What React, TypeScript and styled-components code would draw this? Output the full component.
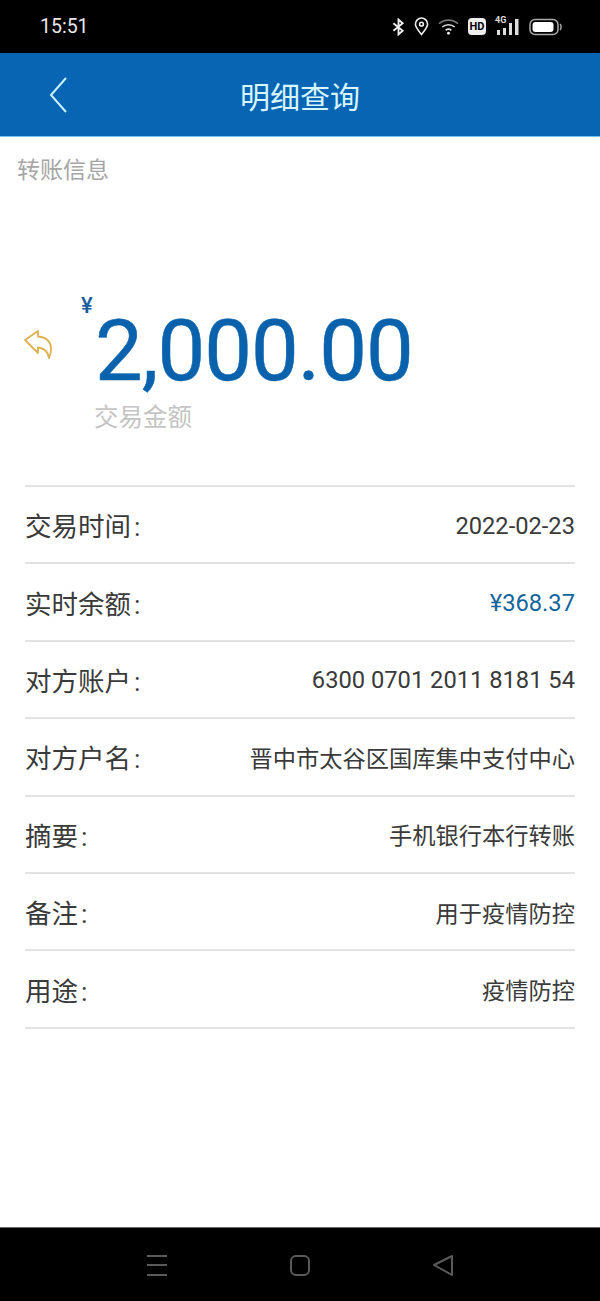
import React, { ReactElement } from 'react';
import styled, { createGlobalStyle } from 'styled-components';

const CJK_STACK = `Roboto, 'Noto Sans CJK SC', sans-serif`;

const DETAILS = [
  { label: '交易时间', value: '2022-02-23', numeric: true },
  { label: '实时余额', value: '¥368.37', numeric: true, accent: true },
  { label: '对方账户', value: '6300 0701 2011 8181 54', numeric: true },
  { label: '对方户名', value: '晋中市太谷区国库集中支付中心' },
  { label: '摘要', value: '手机银行本行转账' },
  { label: '备注', value: '用于疫情防控' },
  { label: '用途', value: '疫情防控' },
];

const App = (): ReactElement => (
  <Page>
    <GlobalStyle />
    <StatusBar>
      <Clock>15:51</Clock>
      <StatusIcons>
        <svg width="13" height="18" viewBox="0 0 14 18" fill="none" stroke="#eee" strokeWidth="2">
          <path d="M1.500 5l10 8-4.500 4V1l4.500 4-10 8" />
        </svg>
        <svg width="15" height="19" viewBox="0 0 16 20" fill="none" stroke="#eee" strokeWidth="1.700">
          <path d="M8 18.500C4 13.500 1.500 10.500 1.500 7.500a6.500 6.500 0 0 1 13 0C14.500 10.500 12 13.500 8 18.500z" />
          <circle cx="8" cy="7.500" r="2" />
        </svg>
        <svg width="21" height="18" viewBox="0 0 22 18" fill="none" stroke="#ddd" strokeWidth="1.700">
          <path d="M1 5.500c5.500-5 14.500-5 20 0" stroke="#777" />
          <path d="M4.500 9c3.500-3.200 9.500-3.200 13 0" />
          <path d="M8 12.500c2-1.600 4-1.600 6 0" />
          <circle cx="11" cy="15.500" r="1.500" fill="#eee" stroke="none" />
        </svg>
        <HdBadge>HD</HdBadge>
        <SignalIcon>
          <SignalLabel>4G</SignalLabel>
          <svg width="25" height="18" viewBox="0 0 25 18" fill="#ddd">
            <rect x="2" y="12" width="3" height="5" />
            <rect x="8" y="10" width="3" height="7" />
            <rect x="14" y="5" width="3" height="12" />
            <rect x="20" y="1" width="3.500" height="16" />
          </svg>
        </SignalIcon>
        <svg width="33" height="18" viewBox="0 0 33 18" fill="none">
          <rect x="1" y="1.500" width="28" height="15" rx="5" stroke="#aaa" strokeWidth="1.500" />
          <rect x="3.500" y="4" width="21" height="10" rx="3" fill="#fff" />
          <path d="M31 6c1.500 1.200 1.500 4.800 0 6" stroke="#aaa" strokeWidth="1.500" />
        </svg>
      </StatusIcons>
    </StatusBar>

    <Header>
      <BackIcon width="20" height="36" viewBox="0 0 20 36" fill="none" stroke="#c9f2ff" strokeWidth="2">
        <path d="M17 1L2 18l15 17" />
      </BackIcon>
      <Title>明细查询</Title>
    </Header>

    <Content>
      <SectionLabel>转账信息</SectionLabel>

      <AmountBlock>
        <ReturnIcon width="32" height="32" viewBox="0 0 32 32" fill="none" stroke="#dfb14f" strokeWidth="1.800" strokeLinejoin="round">
          <path d="M1 10L14 1v5.500c9 .5 17 7 11 21.500-1-6-5-10-11-10.500v5.500L1 10z" />
        </ReturnIcon>
        <AmountColumn>
          <Currency>¥</Currency>
          <Amount>2,000.00</Amount>
          <AmountCaption>交易金额</AmountCaption>
        </AmountColumn>
      </AmountBlock>

      <DetailList>
        {DETAILS.map(({ label, value, accent, numeric }) => (
          <DetailRow key={label}>
            <DetailLabel>
              {label}
              <LabelColon>:</LabelColon>
            </DetailLabel>
            <DetailValue $accent={accent} $numeric={numeric}>
              {value}
            </DetailValue>
          </DetailRow>
        ))}
      </DetailList>
    </Content>

    <NavBar>
      <svg width="22" height="24" viewBox="0 0 22 24" stroke="#5a5a5a" strokeWidth="2">
        <path d="M1 3h20M1 12h20M1 22h20" />
      </svg>
      <svg width="22" height="24" viewBox="0 0 22 24" fill="none" stroke="#5a5a5a" strokeWidth="2">
        <rect x="2" y="3" width="18" height="19" rx="5" />
      </svg>
      <svg width="22" height="24" viewBox="0 0 22 24" fill="none" stroke="#5a5a5a" strokeWidth="2" strokeLinejoin="round">
        <path d="M2 12L20 3v19L2 12z" />
      </svg>
    </NavBar>
  </Page>
);

const GlobalStyle = createGlobalStyle`
  html, body {
    margin: 0;
    padding: 0;
    background: #ffffff;
  }
`;

const Page = styled.div`
  width: 600px;
  height: 1301px;
  display: flex;
  flex-direction: column;
  overflow: hidden;
  font-family: ${CJK_STACK};
  background: #ffffff;
`;

const StatusBar = styled.div`
  flex: 0 0 53px;
  display: flex;
  align-items: center;
  justify-content: space-between;
  padding: 0 38px 0 40px;
  background: #000000;
  box-sizing: border-box;
`;

const Clock = styled.span`
  font-size: 19.500px;
  color: #e8e8e8;
`;

const StatusIcons = styled.div`
  display: flex;
  align-items: center;
  gap: 9px;
`;

const HdBadge = styled.span`
  width: 18px;
  height: 17px;
  border-radius: 4px;
  background: #eeeeee;
  color: #000000;
  font-size: 11px;
  font-weight: 700;
  line-height: 17px;
  text-align: center;
`;

const SignalIcon = styled.div`
  position: relative;
  display: flex;
`;

const SignalLabel = styled.span`
  position: absolute;
  top: -3px;
  left: 0;
  color: #ddd;
  font-size: 9px;
  font-weight: 700;
`;

const Header = styled.header`
  position: relative;
  flex: 0 0 84px;
  display: flex;
  align-items: center;
  justify-content: center;
  background: #0765b4;
  box-sizing: border-box;
  border-bottom: 1px solid #7cc0f0;
`;

const BackIcon = styled.svg`
  position: absolute;
  left: 49px;
  top: 24px;
`;

const Title = styled.h1`
  margin: 0;
  font-size: 30px;
  font-weight: 400;
  color: #d8f6ff;
`;

const Content = styled.main`
  flex: 1;
  display: flex;
  flex-direction: column;
`;

const SectionLabel = styled.div`
  padding: 20px 0 0 17px;
  font-size: 23px;
  line-height: 28px;
  color: #a6a6a6;
`;

const AmountBlock = styled.section`
  display: flex;
  align-items: flex-start;
  height: 300px;
  padding: 120px 0 0 24px;
  box-sizing: border-box;
`;

const ReturnIcon = styled.svg`
  margin-top: 25px;
`;

const AmountColumn = styled.div`
  position: relative;
  margin-left: 39px;
`;

const Currency = styled.span`
  position: absolute;
  left: -14px;
  top: -10px;
  font-size: 22px;
  font-weight: 500;
  line-height: 22px;
  color: #1b5f9e;
`;

const Amount = styled.div`
  font-size: 85px;
  line-height: 92px;
  letter-spacing: -1px;
  color: #0a62ad;
  -webkit-text-stroke: 0.500px #0a62ad;
`;

const AmountCaption = styled.div`
  margin: 6px 0 0 -1px;
  font-size: 24.500px;
  line-height: 30px;
  color: #c4c4c4;
`;

const DetailList = styled.div`
  margin: 0 25px;
  border-top: 2px solid #e2e2e2;
`;

const DetailRow = styled.div`
  display: flex;
  align-items: center;
  justify-content: space-between;
  height: 75.400px;
  border-bottom: 2px solid #e2e2e2;
`;

const DetailLabel = styled.span`
  font-size: 26.500px;
  color: #3a3a3a;
`;

const LabelColon = styled.span`
  margin-left: 3px;
`;

const DetailValue = styled.span<{ $accent?: boolean; $numeric?: boolean }>`
  font-size: ${({ $numeric }) => ($numeric ? '23.700px' : '23.250px')};
  margin-top: ${({ $numeric }) => ($numeric ? '2px' : '0')};
  color: ${({ $accent }) => ($accent ? '#14659c' : '#3a3a3a')};
`;

const NavBar = styled.nav`
  flex: 0 0 74px;
  display: flex;
  align-items: center;
  justify-content: space-between;
  padding: 0 146px;
  background: #000000;
  box-sizing: border-box;
  border-top: 1px solid #666666;
`;

export default App;
